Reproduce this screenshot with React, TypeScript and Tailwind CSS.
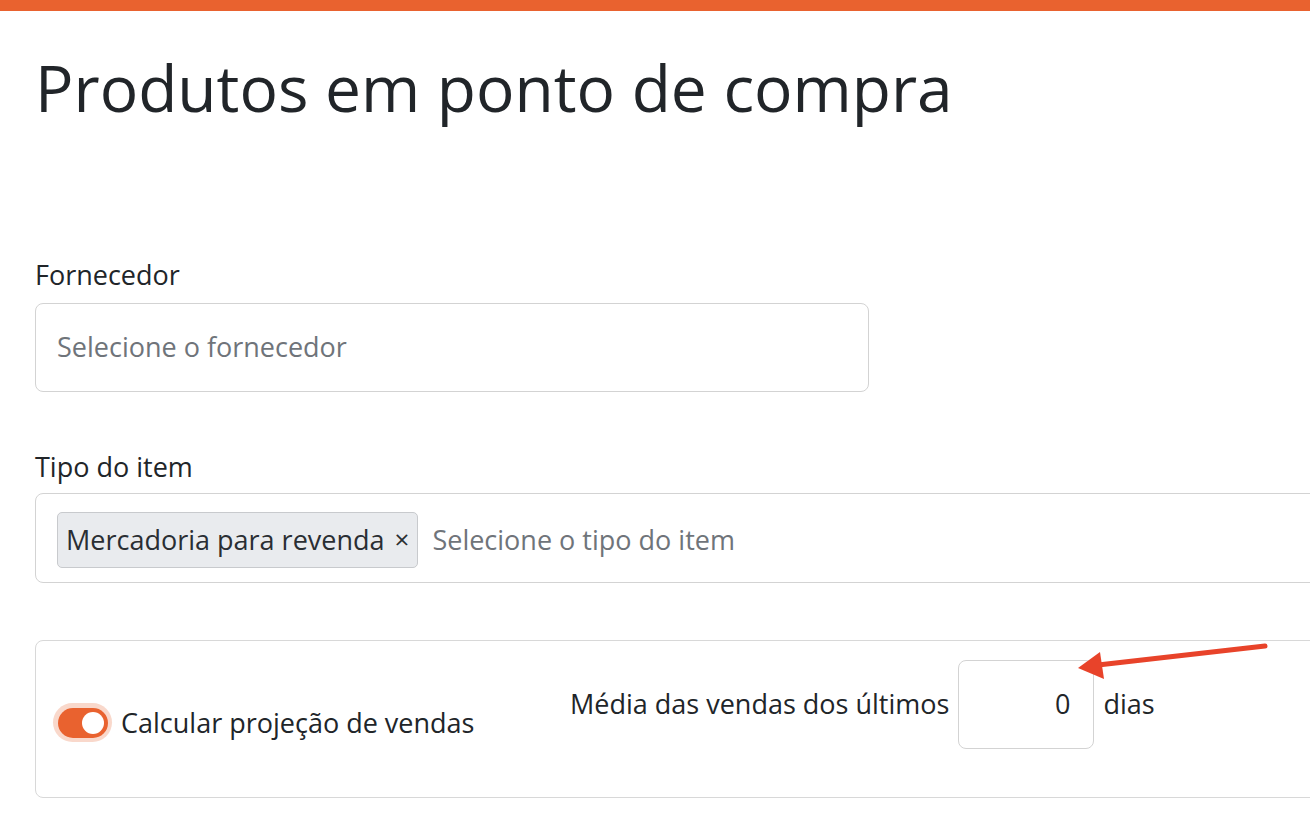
import React from "react";

export default function App() {
  const font = { fontFamily: '"Open Sans", "Noto Sans", sans-serif' };
  return (
    <div className="relative w-[1310px] h-[814px] overflow-hidden bg-white text-[#212529]" style={font}>
      <div className="h-[11px] bg-[#e9622f]" />
      <div className="pl-[35px] w-[1420px]">
        <h1 className="mt-[39px] text-[64px] leading-[1.2] font-normal">Produtos em ponto de compra</h1>

        <div className="mt-[127px]">
          <label className="block text-[27px] leading-[42px]">Fornecedor</label>
          <div className="mt-[7px] w-[834px] h-[89px] border border-[#d3d3d3] rounded-[8px] flex items-center pl-[21px]">
            <span className="text-[27px] text-[#6f747a]">Selecione o fornecedor</span>
          </div>
        </div>

        <div className="mt-[54px]">
          <label className="block text-[27px] leading-[42px]">Tipo do item</label>
          <div className="mt-[5px] w-[1340px] h-[90px] border border-[#d3d3d3] rounded-[8px] flex items-start pt-[18px] pl-[21px]">
            <span className="h-[56px] flex items-center px-[8px] bg-[#e9ebee] border border-[#c8cacd] rounded-[5px] text-[27px] text-[#2a2e33]">
              Mercadoria para revenda
              <span className="ml-[10px] text-[26px]">×</span>
            </span>
            <span className="ml-[14px] h-[56px] flex items-center text-[27px] text-[#6f747a]">Selecione o tipo do item</span>
          </div>
        </div>

        <div className="mt-[57px] w-[1340px] h-[158px] border border-[#d8d8d8] rounded-[8px] flex">
          <div className="w-[514px] pl-[17px] pt-[61px]">
            <div className="flex items-center h-[42px]">
              <div className="w-[59px] h-[39px] rounded-full bg-[#f9d8cb] flex items-center justify-center">
                <div className="w-[50px] h-[30px] rounded-full bg-[#e9622f] flex items-center justify-end pr-[4px]">
                  <div className="w-[22px] h-[22px] rounded-full bg-white" />
                </div>
              </div>
              <span className="ml-[9px] text-[27px] leading-[42px]">Calcular projeção de vendas</span>
            </div>
          </div>
          <div className="pt-[19px] flex items-start">
            <div className="flex items-center h-[89px] pl-[20px]">
              <span className="text-[27px] leading-[42px]">Média das vendas dos últimos</span>
              <div className="ml-[9px] w-[136px] h-[89px] border border-[#d3d3d3] rounded-[8px] flex items-center justify-end pr-[23px]">
                <span className="text-[27px]">0</span>
              </div>
              <span className="ml-[9px] text-[27px] leading-[42px]">dias</span>
            </div>
          </div>
        </div>
      </div>

      <svg className="absolute left-0 top-0 pointer-events-none" width="1310" height="814">
        <line x1="1265" y1="646" x2="1098" y2="665" stroke="#e8432a" strokeWidth="5" strokeLinecap="round" />
        <polygon points="1078,668 1100,652 1104,679" fill="#e8432a" />
      </svg>
    </div>
  );
}
